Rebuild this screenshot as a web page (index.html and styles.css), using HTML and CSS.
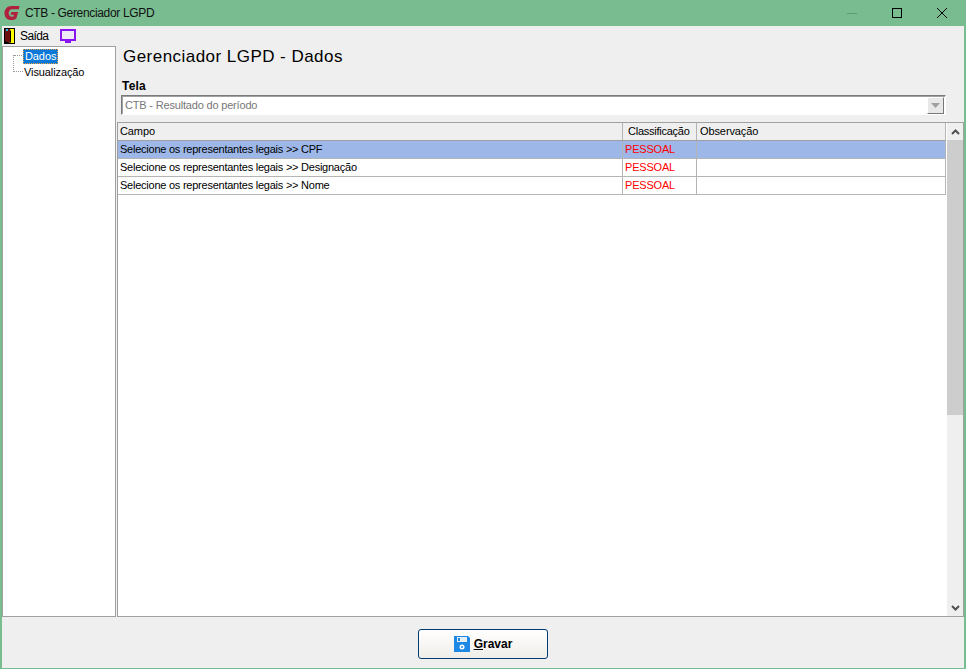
FILE: index.html
```html
<!DOCTYPE html>
<html lang="pt-BR">
<head>
<meta charset="utf-8">
<title>CTB - Gerenciador LGPD</title>
<link rel="stylesheet" href="styles.css">
</head>
<body>
<div class="window">
  <header class="titlebar">
    <svg class="logo" width="16" height="16" viewBox="0 0 16 16"><path d="M15.500 1H7.500C3.500 1 .5 3.800 .5 8c0 4.400 2.800 7 6.500 7 2 0 3.800-.6 5.300-1.600L14.200 7H7.300L6.400 9.800h3.500l-.5 1.700c-.5.200-1 .3-1.500.3-1.800 0-3.200-1.400-3.200-3.600 0-2.400 1.500-4 3.600-4h6.500z" fill="#b0213f"/></svg>
    <span class="title">CTB - Gerenciador LGPD</span>
    <div class="winbtns">
      <svg width="12" height="12" viewBox="0 0 12 12"><path d="M1 6.500H11" stroke="#5f9a74" fill="none"/></svg>
      <svg width="12" height="12" viewBox="0 0 12 12"><rect x="1.500" y="1.500" width="9" height="9" stroke="#000" fill="none"/></svg>
      <svg width="12" height="12" viewBox="0 0 12 12"><path d="M1 1L11 11M11 1L1 11" stroke="#000" fill="none"/></svg>
    </div>
  </header>
  <nav class="menubar">
    <span class="menuitem">
      <svg width="11" height="16" viewBox="0 0 11 16"><rect width="11" height="16" fill="#000"/><rect x="5" y="1" width="5" height="14" fill="#ffff00"/><path d="M1 1H6V15L1 13z" fill="#6e1010"/><path d="M6 2L7 3V14L6 15z" fill="#000"/><rect x="2" y="1" width="2" height="2" fill="#19c3e6"/></svg>
      <span>Saída</span>
    </span>
    <svg class="monitor" width="16" height="15" viewBox="0 0 16 15"><rect x="1" y="1" width="14" height="10" fill="#efe9f5" stroke="#8a14f0" stroke-width="2"/><rect x="5" y="12" width="6" height="2" fill="#8a14f0"/></svg>
  </nav>
  <main class="main">
    <aside class="tree">
      <div class="connector"></div>
      <div class="node selected">Dados</div>
      <div class="node plain">Visualização</div>
    </aside>
    <section class="content">
      <h1 class="heading">Gerenciador LGPD - Dados</h1>
      <label class="field-label">Tela</label>
      <div class="combo">
        <span class="combo-text">CTB - Resultado do período</span>
        <span class="combo-btn"><svg width="9" height="5" viewBox="0 0 9 5"><path d="M0 0H9L4.500 5z" fill="#a0a0a0"/></svg></span>
      </div>
      <div class="grid">
        <div class="grid-body">
          <div class="row head"><div class="c1">Campo</div><div class="c2 hc">Classificação</div><div class="c3">Observação</div></div>
          <div class="row sel"><div class="c1">Selecione os representantes legais &gt;&gt; CPF</div><div class="c2 red">PESSOAL</div><div class="c3"></div></div>
          <div class="row"><div class="c1">Selecione os representantes legais &gt;&gt; Designação</div><div class="c2 red">PESSOAL</div><div class="c3"></div></div>
          <div class="row"><div class="c1">Selecione os representantes legais &gt;&gt; Nome</div><div class="c2 red">PESSOAL</div><div class="c3"></div></div>
        </div>
        <div class="scrollbar">
          <div class="arrow"><svg width="9" height="6" viewBox="0 0 9 6"><path d="M1 5L4.500 1.500 8 5" stroke="#505050" stroke-width="2" fill="none"/></svg></div>
          <div class="thumb"></div>
          <div class="track"></div>
          <div class="arrow"><svg width="9" height="6" viewBox="0 0 9 6"><path d="M1 1L4.500 4.500 8 1" stroke="#505050" stroke-width="2" fill="none"/></svg></div>
        </div>
      </div>
    </section>
  </main>
  <footer class="footer">
    <button class="save" type="button">
      <svg width="16" height="16" viewBox="0 0 16 16"><path d="M0 0H14L16 2V16H0z" fill="#1e88e5"/><rect x="3" y="1" width="10" height="5" fill="#e4eef7"/><rect x="4" y="2" width="2" height="3" fill="#1e88e5"/><circle cx="8" cy="11" r="2.500" fill="#fff"/><circle cx="8" cy="11" r="1" fill="#1e88e5"/></svg>
      <span><u>G</u>ravar</span>
    </button>
  </footer>
</div>
</body>
</html>
```
FILE: styles.css
```css
* { box-sizing: border-box; }
html, body { margin: 0; padding: 0; }
body { font-family: "Liberation Sans", Arial, sans-serif; font-size: 11px; color: #000; overflow: hidden; }
.window { width: 966px; height: 669px; display: flex; flex-direction: column; background: #efefef; border: 1px solid #78bc8f; border-top: 0; border-left-width: 2px; border-right-width: 2px; }
.titlebar { height: 26px; margin: 0 -2px; padding: 0 18px 0 4px; background: #78bc8f; display: flex; align-items: center; flex: none; }
.logo { margin-right: 5px; }
.title { font-size: 12px; color: #111; letter-spacing: -.34px; }
.winbtns { margin-left: auto; display: flex; gap: 33px; }
.menubar { height: 20px; flex: none; display: flex; align-items: center; gap: 12px; padding-left: 2px; }
.menuitem { display: flex; align-items: center; gap: 5px; font-size: 12px; letter-spacing: -.6px; }
.monitor { display: block; }
.main { flex: none; height: 571px; display: flex; }
.tree { width: 114px; margin-right: 1px; flex: none; background: #fff; border: 1px solid #a0a0a0; position: relative; padding: 2px 0 0 20px; font-size: 11px; }
.node { height: 16px; line-height: 15px; padding: 0 2px; width: max-content; }
.node.plain { margin-left: -1px; letter-spacing: -.1px; }
.node.selected { background: #0a78d7; color: #fff; outline: 1px dotted #f0a040; outline-offset: -1px; height: 15px; margin-bottom: 1px; letter-spacing: -.1px; }
.connector { position: absolute; left: 10px; top: 8px; width: 10px; height: 17px; border-left: 1px dotted #999; border-bottom: 1px dotted #999; }
.connector::before { content: ""; position: absolute; left: 0; top: 0; width: 10px; border-top: 1px dotted #999; }
.content { flex: 1; min-width: 0; display: flex; flex-direction: column; }
.heading { margin: 0; padding: 1px 0 0 6px; font-size: 17px; font-weight: 400; line-height: 20px; height: 33px; letter-spacing: .46px; }
.field-label { display: block; font-weight: 700; font-size: 12px; line-height: 14px; padding-left: 5px; height: 16px; letter-spacing: .2px; }
.combo { height: 20px; margin: 0 18px 0 4px; background: #fff; border: 1px solid; border-color: #7a7a7a #fff #fff #7a7a7a; box-shadow: inset 1px 1px 0 #a0a0a0; display: flex; align-items: center; padding: 0 1px 0 3px; font-size: 11px; color: #777; letter-spacing: -.18px; }
.combo-text { flex: 1; }
.combo-btn { width: 17px; height: 17px; background: #e8e8e8; border: 1px solid; border-color: #fff #777 #777 #fff; display: flex; align-items: center; justify-content: center; }
.grid { margin-top: 7px; height: 495px; border: 1px solid #a0a0a0; display: flex; background: #fff; }
.grid-body { width: 828px; flex: none; }
.row { display: flex; height: 18px; border-bottom: 1px solid #b4b4b4; line-height: 17px; font-size: 11px; background: #fff; letter-spacing: -.24px; }
.row.head { height: 18px; background: #efefef; border-bottom-color: #a0a0a0; line-height: 17px; letter-spacing: -.1px; }
.row.sel { background: #9db8e8; }
.c1 { width: 505px; padding-left: 2px; border-right: 1px solid #b4b4b4; flex: none; white-space: nowrap; }
.c2 { width: 74px; padding-left: 2px; border-right: 1px solid #b4b4b4; flex: none; white-space: nowrap; }
.c2.hc { padding-left: 5px; letter-spacing: -.25px; }
.c3 { flex: 1; padding-left: 3px; border-right: 1px solid #b4b4b4; }
.red { color: #f00; letter-spacing: -.2px; }
.scrollbar { flex: 1; display: flex; flex-direction: column; background: #efefef; margin-left: 1px; }
.arrow { height: 17px; display: flex; align-items: center; justify-content: center; flex: none; }
.thumb { height: 275px; background: #cdcdcd; flex: none; }
.track { flex: 1; }
.footer { flex: 1; display: flex; justify-content: center; align-items: flex-start; padding-top: 12px; }
.save { width: 130px; height: 30px; border: 1px solid #003c74; border-radius: 3px; background: linear-gradient(#fff, #f0ede8); display: flex; align-items: center; justify-content: center; gap: 4px; padding: 0; font-family: inherit; font-size: 12px; font-weight: 700; color: #000; }
```
